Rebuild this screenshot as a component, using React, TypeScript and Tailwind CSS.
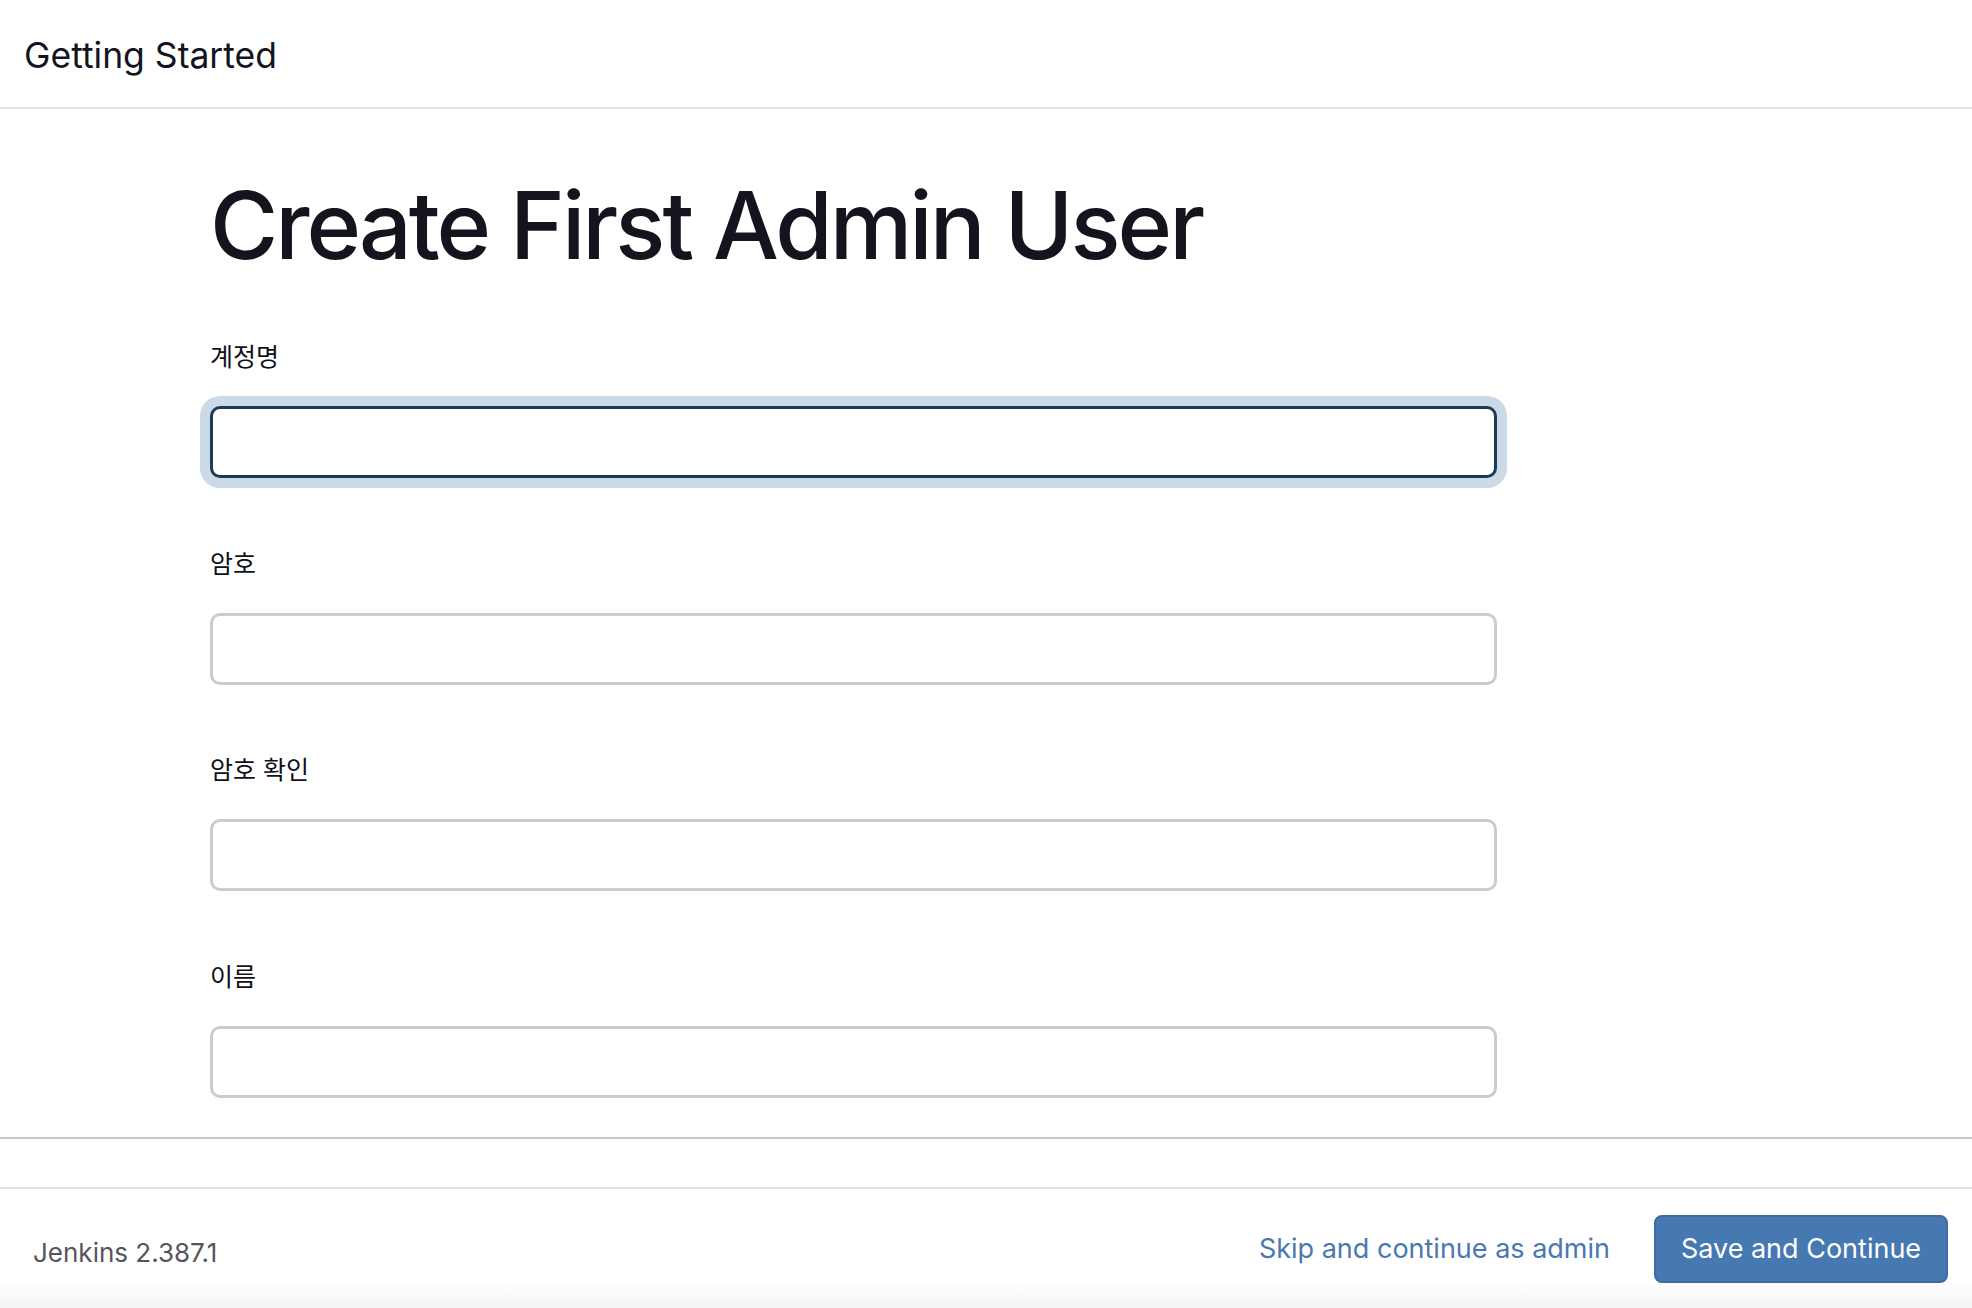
import { useState } from "react";

const campos = [
  { id: "username", etiqueta: "계정명", tipo: "text" },
  { id: "password1", etiqueta: "암호", tipo: "password" },
  { id: "password2", etiqueta: "암호 확인", tipo: "password" },
  { id: "fullname", etiqueta: "이름", tipo: "text" },
];

/** Pantalla del asistente de Jenkins: "Create First Admin User". */
export default function App() {
  const [valores, setValores] = useState<Record<string, string>>({});

  return (
    <div
      className="flex h-[1308px] w-full flex-col overflow-hidden bg-white text-[#14141f]"
      style={{ fontFamily: 'Inter, "Noto Sans CJK KR", sans-serif' }}
    >
      <header className="flex h-[109px] shrink-0 items-center border-b-2 border-[#e5e5e5] px-[24px] pt-[4px]">
        <h1 className="text-[35.5px] leading-none font-normal">Getting Started</h1>
      </header>

      <main className="flex-1 overflow-hidden pl-[210px]">
        <div className="w-[1287px]">
          <h2 className="mt-[70px] text-[93px] leading-none font-medium tracking-[-0.032em]">
            Create First Admin User
          </h2>

          <form className="mt-[73px]" onSubmit={(e) => e.preventDefault()}>
            {campos.map((campo, i) => (
              <div key={campo.id} className="mb-[73.5px]">
                <label htmlFor={campo.id} className="block text-[25px] leading-[24px] text-[#101018]">
                  {campo.etiqueta}
                </label>
                <input
                  id={campo.id}
                  type={campo.tipo}
                  value={valores[campo.id] ?? ""}
                  onChange={(e) => setValores({ ...valores, [campo.id]: e.target.value })}
                  className={
                    i === 0
                      ? "mt-[37px] block h-[72px] w-full rounded-[10px] border-[3px] border-[#1d3a58] bg-white px-4 text-[24px] outline-none ring-[10px] ring-[#ccd9e6]"
                      : "mt-[37px] block h-[72px] w-full rounded-[10px] border-[3px] border-[#c6ced2] bg-white px-4 text-[24px] outline-none"
                  }
                />
              </div>
            ))}
          </form>
        </div>
      </main>

      <div className="h-[50px] shrink-0 border-t-2 border-[#c9c9c9]" />

      <footer className="flex h-[121px] shrink-0 items-center justify-between border-t-2 border-[#e3e3e3] bg-linear-to-b from-white from-75% to-[#f5f5f5] pr-[24px] pl-[33px]">
        <span className="pt-[8px] text-[26px] leading-none text-[#55555c]">Jenkins 2.387.1</span>
        <div className="flex items-center gap-[44px]">
          <button type="button" className="text-[27px] leading-none text-[#4a78b1]">
            Skip and continue as admin
          </button>
          <button
            type="submit"
            className="h-[68px] w-[294px] rounded-[8px] border-2 border-[#3f6ba2] bg-[#4678b1] text-[27px] leading-none text-white"
          >
            Save and Continue
          </button>
        </div>
      </footer>
    </div>
  );
}
